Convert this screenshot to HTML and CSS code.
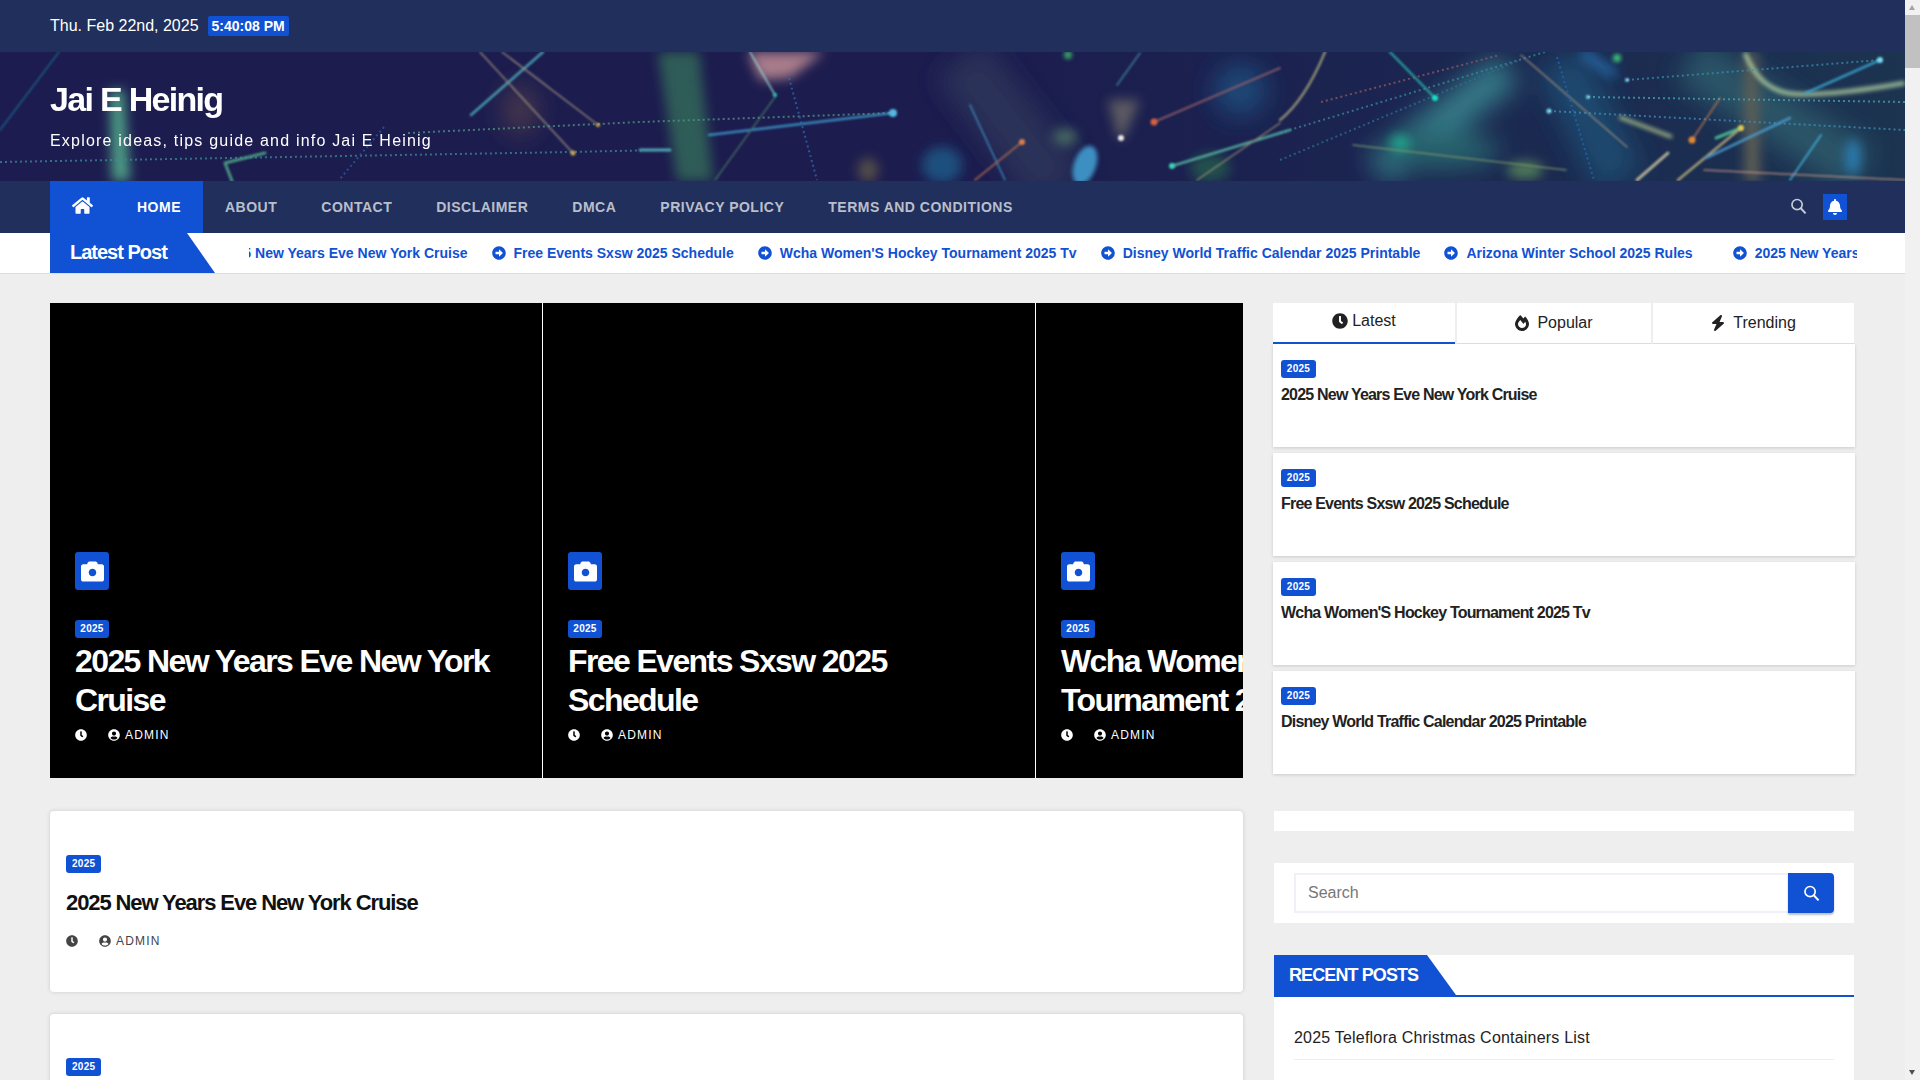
FILE: index.html
```html
<!DOCTYPE html>
<html lang="en">
<head>
    <meta charset="UTF-8">
    <meta name="viewport" content="width=device-width, initial-scale=1.0">
    <title>Jai E Heinig</title>
    <link rel="stylesheet" href="styles.css">
</head>
<body>
    <svg class="icon-defs" aria-hidden="true">
        <symbol id="i-clock" viewBox="0 0 512 512"><path d="M256,8C119,8,8,119,8,256S119,504,256,504,504,393,504,256,393,8,256,8Zm92.49,313h0l-20,25a16,16,0,0,1-22.49,2.5h0l-67-49.72a40,40,0,0,1-15-31.23V112a16,16,0,0,1,16-16h32a16,16,0,0,1,16,16V256l58,42.5A16,16,0,0,1,348.49,321Z"/></symbol>
        <symbol id="i-arrow" viewBox="0 0 512 512"><path d="M256 8c137 0 248 111 248 248S393 504 256 504 8 393 8 256 119 8 256 8zM140 300h116v70.9c0 10.7 13 16.1 20.5 8.5l114.3-114.9c4.7-4.7 4.7-12.2 0-16.9l-114.3-115c-7.6-7.6-20.5-2.2-20.5 8.5V212H140c-6.6 0-12 5.4-12 12v64c0 6.6 5.4 12 12 12z"/></symbol>
        <symbol id="i-user" viewBox="0 0 496 512"><path d="M248 8C111 8 0 119 0 256s111 248 248 248 248-111 248-248S385 8 248 8zm0 96c48.6 0 88 39.4 88 88s-39.4 88-88 88-88-39.4-88-88 39.4-88 88-88zm0 344c-58.7 0-111.3-26.6-146.5-68.2 18.8-35.4 55.6-59.8 98.5-59.8 2.4 0 4.8.4 7.1 1.1 13 4.2 26.6 6.9 40.9 6.9 14.3 0 28-2.7 40.9-6.9 2.3-.7 4.7-1.1 7.1-1.1 42.9 0 79.7 24.4 98.5 59.8C359.3 421.4 306.7 448 248 448z"/></symbol>
        <symbol id="i-camera" viewBox="0 0 512 512"><path fill-rule="evenodd" d="M512 144v288c0 26.5-21.5 48-48 48H48c-26.5 0-48-21.5-48-48V144c0-26.5 21.5-48 48-48h88l12.3-32.9c7-18.7 24.9-31.1 44.9-31.1h125.5c20 0 37.9 12.4 44.9 31.1L376 96h88c26.5 0 48 21.5 48 48zM340 280c0-46.4-37.6-84-84-84s-84 37.6-84 84 37.6 84 84 84 84-37.6 84-84z"/></symbol>
        <symbol id="i-home" viewBox="0 0 576 512"><path d="M280.37 148.26L96 300.11V464a16 16 0 0 0 16 16l112.06-.29a16 16 0 0 0 15.92-16V368a16 16 0 0 1 16-16h64a16 16 0 0 1 16 16v95.64a16 16 0 0 0 16 16.05L464 480a16 16 0 0 0 16-16V300L295.67 148.26a12.19 12.19 0 0 0-15.3 0zM571.6 251.47L488 182.56V44.05a12 12 0 0 0-12-12h-56a12 12 0 0 0-12 12v72.61L318.47 43a48 48 0 0 0-61 0L4.34 251.47a12 12 0 0 0-1.6 16.9l25.5 31A12 12 0 0 0 45.15 301l235.22-193.74a12.19 12.19 0 0 1 15.3 0L530.9 301a12 12 0 0 0 16.9-1.6l25.5-31a12 12 0 0 0-1.7-16.93z"/></symbol>
        <symbol id="i-bell" viewBox="0 0 448 512"><path d="M224 512c35.32 0 63.97-28.65 63.97-64H160.03c0 35.35 28.65 64 63.97 64zm215.39-149.71c-19.32-20.76-55.47-51.99-55.47-154.29 0-77.7-54.48-139.9-127.94-155.16V32c0-17.67-14.32-32-31.98-32s-31.98 14.33-31.98 32v20.84C118.56 68.1 64.08 130.3 64.08 208c0 102.3-36.15 133.53-55.47 154.29-6 6.45-8.66 14.16-8.61 21.71.11 16.4 12.98 32 32.1 32h383.8c19.12 0 32-15.6 32.1-32 .05-7.55-2.61-15.27-8.61-21.71z"/></symbol>
        <symbol id="i-fire" viewBox="0 0 448 512"><path d="M323.56 51.2c-20.8 19.3-39.58 39.59-56.22 59.97C240.08 73.62 206.28 35.53 168 0 69.74 91.17 0 209.96 0 281.6 0 408.85 100.29 512 224 512s224-103.15 224-230.4c0-53.27-51.98-163.14-124.44-230.4zm-19.47 340.65C282.43 407.01 255.72 416 226.86 416 154.71 416 96 368.26 96 290.75c0-38.61 24.31-72.63 72.79-130.75 6.93 7.98 98.83 125.34 98.83 125.34l58.63-66.88c4.14 6.85 7.91 13.55 11.27 19.97 27.35 52.19 15.81 118.97-33.43 153.42z"/></symbol>
        <symbol id="i-bolt" viewBox="0 0 448 512"><path d="M349.4 44.6c5.9-13.7 1.5-29.7-10.6-38.5s-28.6-8-39.9 1.8l-256 224c-10 8.8-13.6 22.9-8.9 35.3S50.7 288 64 288H175.5L98.6 467.4c-5.9 13.7-1.5 29.7 10.6 38.5s28.6 8 39.9-1.8l256-224c10-8.8 13.6-22.9 8.9-35.3s-18.1-20.3-31.3-20.3H272.5L349.4 44.6z"/></symbol>
        <symbol id="i-search" viewBox="0 0 24 24"><circle cx="10" cy="10" r="7.2" fill="none" stroke="currentColor" stroke-width="2.4"/><path d="M15.5 15.5L22 22.5" fill="none" stroke="currentColor" stroke-width="2.8"/></symbol>
    </svg>

    <header class="top-bar">
        <span class="top-date">Thu. Feb 22nd, 2025</span>
        <span class="top-time">5:40:08 PM</span>
    </header>

    <div class="brand">
        <!-- header photo, redrawn by hand -->
        <svg class="brand-art" viewBox="0 52 1905 129" preserveAspectRatio="none" aria-hidden="true">
            <defs>
                <linearGradient id="art-bg" x1="0" x2="1" y1="0" y2="0">
                    <stop offset="0" stop-color="#1d1c50"/>
                    <stop offset="0.5" stop-color="#1c1c4e"/>
                    <stop offset="0.72" stop-color="#1b2450"/>
                    <stop offset="1" stop-color="#1c3450"/>
                </linearGradient>
                <filter id="blur-xs"><feGaussianBlur stdDeviation="0.8"/></filter>
                <filter id="blur-s"><feGaussianBlur stdDeviation="2"/></filter>
                <filter id="blur-m"><feGaussianBlur stdDeviation="6"/></filter>
                <filter id="blur-l"><feGaussianBlur stdDeviation="13"/></filter>
            </defs>
            <rect x="0" y="52" width="1905" height="129" fill="url(#art-bg)"/>
            <g filter="url(#blur-l)" fill="none">
                <path d="M1378 170L1508 70" stroke="#347c88" stroke-width="36"/>
                <path d="M1560 60L1620 180" stroke="#1d4a6e" stroke-width="50"/>
                <path d="M1690 60L1860 170" stroke="#2a5568" stroke-width="50"/>
                <path d="M960 60L1060 190" stroke="#2c3258" stroke-width="60"/>
                <ellipse cx="1240" cy="90" rx="26" ry="26" fill="#1f4a78"/>
                <ellipse cx="1440" cy="150" rx="60" ry="20" fill="#27606c"/>
                <ellipse cx="520" cy="110" rx="16" ry="24" fill="#4c3a4c"/>
            </g>
            <g filter="url(#blur-m)">
                <path d="M110 90L124 90L130 181L112 181Z" fill="#4e9c84"/>
                <path d="M658 52L699 52L713 181L677 181Z" fill="#2f5c56"/>
                <path d="M748 52L824 52L790 78L760 80Z" fill="#a87c8a"/>
                <ellipse cx="942" cy="165" rx="20" ry="18" fill="#1f4f7e"/>
                <ellipse cx="868" cy="170" rx="10" ry="12" fill="#54504a"/>
                <ellipse cx="1065" cy="137" rx="12" ry="8" fill="#4a6c64"/>
                <ellipse cx="1210" cy="168" rx="20" ry="14" fill="#24504e"/>
                <ellipse cx="1400" cy="143" rx="10" ry="8" fill="#22a98e"/>
                <ellipse cx="1525" cy="170" rx="18" ry="9" fill="#4f7a5a"/>
                <ellipse cx="1853" cy="157" rx="7" ry="18" fill="#2a7fb5"/>
                <path d="M1582 53L1615 75" stroke="#2771b0" stroke-width="8"/>
                <path d="M1745 52L1757 52L1760 181L1745 181Z" fill="#5f5f54"/>
                <path d="M1108 100L1140 100L1124 138L1118 138Z" fill="#5c5a62"/>
            </g>
            <g filter="url(#blur-s)">
                <ellipse cx="1085" cy="165" rx="11" ry="20" transform="rotate(20 1085 165)" fill="#3d8fc2"/>
                <circle cx="1617" cy="58" r="4" fill="#3cc47a"/>
                <circle cx="1068" cy="55" r="4" fill="#3aa868"/>
                <path d="M1619 117L1672 137" stroke="#b2c68a" stroke-width="3"/>
                <path d="M1745 53Q1760 92 1795 94T1905 83" fill="none" stroke="#a9c89c" stroke-width="4"/>
            </g>
            <g fill="none" stroke-linecap="round" filter="url(#blur-xs)" opacity="0.82">
                <path d="M0 130L59 52" stroke="#1c6288" stroke-width="2"/>
                <path d="M471 115L543 52" stroke="#4eb6bf" stroke-width="2.5"/>
                <path d="M480 52L573 153" stroke="#a89c84" stroke-width="1.5"/>
                <path d="M502 52L598 125" stroke="#a89c84" stroke-width="1.5"/>
                <path d="M225 163L232 181M225 163L265 153" stroke="#52b28c" stroke-width="3"/>
                <path d="M750 52L775 95" stroke="#9cdfd6" stroke-width="1.5"/>
                <path d="M709 135L893 113" stroke="#3f9fd2" stroke-width="2.5"/>
                <path d="M640 150L670 150" stroke="#5ec4ce" stroke-width="3"/>
                <path d="M775 97L715 180" stroke="#4b7a6a" stroke-width="1.5"/>
                <path d="M970 105L1005 180" stroke="#3f9fd2" stroke-width="1.5"/>
                <path d="M1022 142L975 180" stroke="#a86a50" stroke-width="2"/>
                <path d="M1154 122L1280 68" stroke="#95606a" stroke-width="2"/>
                <path d="M1172 166L1290 130" stroke="#5cc0aa" stroke-width="2.5"/>
                <path d="M1197 180L1280 123" stroke="#a89c78" stroke-width="1.5"/>
                <path d="M1117 85L1140 53" stroke="#3f7f9c" stroke-width="2"/>
                <path d="M1280 120Q1305 100 1325 52" stroke="#a8a47c" stroke-width="2.5"/>
                <path d="M1390 52L1435 98" stroke="#2cb4aa" stroke-width="2.5"/>
                <path d="M1521 55L1627 147" stroke="#a8927e" stroke-width="1.5"/>
                <path d="M1353 145L1566 170" stroke="#7d9a6c" stroke-width="1.5"/>
                <path d="M1880 60L1806 93" stroke="#3aa7d2" stroke-width="2.5"/>
                <path d="M1692 140L1720 98" stroke="#a86f50" stroke-width="2"/>
                <path d="M1716 138L1741 128" stroke="#4fd09a" stroke-width="3"/>
                <path d="M1678 180L1741 128" stroke="#c2b67e" stroke-width="2.5"/>
                <path d="M1706 158L1790 118" stroke="#4b9fd0" stroke-width="2.5"/>
                <path d="M1790 180L1821 135" stroke="#43b4de" stroke-width="2"/>
                <path d="M1704 170L1905 180" stroke="#c59488" stroke-width="1.5"/>
                <path d="M1637 180L1668 153" stroke="#cfc7a0" stroke-width="3"/>
            </g>
            <g fill="none" stroke-width="2" stroke-dasharray="2 3" opacity="0.75">
                <path d="M0 162L571 152L660 150" stroke="#3b8c95"/>
                <path d="M408 133L640 122L893 113" stroke="#4d9a80"/>
                <path d="M384 127L339 180" stroke="#2a5ea2"/>
                <path d="M789 78L817 180" stroke="#2b6cb0"/>
                <path d="M1321 102L1500 55" stroke="#955a62"/>
                <path d="M1280 133L1545 52" stroke="#3a8c98"/>
                <path d="M1557 57L1594 180" stroke="#2a64ac"/>
                <path d="M1627 80L1880 60" stroke="#3a8cac"/>
                <path d="M1588 97L1905 102" stroke="#4aa6b2"/>
                <path d="M1549 111L1905 130" stroke="#3f8eb6"/>
                <path d="M1280 160L1520 60" stroke="#2c6f90"/>
            </g>
            <g filter="url(#blur-xs)">
                <circle cx="598" cy="125" r="2" fill="#c9a94e"/>
                <circle cx="573" cy="153" r="2.5" fill="#c9a94e"/>
                <circle cx="893" cy="113" r="4" fill="#55b8e2"/>
                <circle cx="775" cy="95" r="2" fill="#22c4ac"/>
                <circle cx="1022" cy="142" r="3" fill="#d9804e"/>
                <circle cx="1121" cy="138" r="3" fill="#f0e8e6"/>
                <circle cx="1154" cy="122" r="3.5" fill="#d8603e"/>
                <circle cx="1172" cy="166" r="3" fill="#3cd0b0"/>
                <circle cx="1435" cy="98" r="3" fill="#1ee0c4"/>
                <circle cx="1880" cy="60" r="3" fill="#7ad8ee"/>
                <circle cx="1627" cy="80" r="2" fill="#7ad8ee"/>
                <circle cx="1588" cy="97" r="2" fill="#7ad8ee"/>
                <circle cx="1549" cy="111" r="2.5" fill="#7ad8ee"/>
                <circle cx="1692" cy="140" r="3.5" fill="#e08838"/>
                <circle cx="1741" cy="128" r="3" fill="#e0c850"/>
            </g>
        </svg>
        <div class="brand-text">
            <h1 class="site-title">Jai E Heinig</h1>
            <p class="site-tagline">Explore ideas, tips guide and info Jai E Heinig</p>
        </div>
    </div>

    <nav class="main-nav">
        <ul class="nav-list">
            <li class="nav-item nav-home"><a href="#"><svg class="nav-home-icon"><use href="#i-home"/></svg></a></li>
            <li class="nav-item active"><a href="#">Home</a></li>
            <li class="nav-item"><a href="#">About</a></li>
            <li class="nav-item"><a href="#">Contact</a></li>
            <li class="nav-item"><a href="#">Disclaimer</a></li>
            <li class="nav-item"><a href="#">DMCA</a></li>
            <li class="nav-item"><a href="#">Privacy Policy</a></li>
            <li class="nav-item"><a href="#">Terms and Conditions</a></li>
        </ul>
        <div class="nav-tools">
            <svg class="nav-search"><use href="#i-search"/></svg>
            <span class="nav-bell"><svg><use href="#i-bell"/></svg></span>
        </div>
    </nav>

    <div class="ticker">
        <div class="ticker-label">Latest Post</div>
        <div class="ticker-window">
            <div class="ticker-track">
                <a class="ticker-item" href="#"><svg><use href="#i-arrow"/></svg>2025 New Years Eve New York Cruise</a>
                <a class="ticker-item" href="#"><svg><use href="#i-arrow"/></svg>Free Events Sxsw 2025 Schedule</a>
                <a class="ticker-item" href="#"><svg><use href="#i-arrow"/></svg>Wcha Women'S Hockey Tournament 2025 Tv</a>
                <a class="ticker-item" href="#"><svg><use href="#i-arrow"/></svg>Disney World Traffic Calendar 2025 Printable</a>
                <a class="ticker-item ticker-last" href="#"><svg><use href="#i-arrow"/></svg>Arizona Winter School 2025 Rules</a>
                <a class="ticker-item" href="#"><svg><use href="#i-arrow"/></svg>2025 New Years Eve New York Cruise</a>
            </div>
        </div>
    </div>

    <div class="page-body">
        <main class="main-col">
            <section class="slider">
                <article class="slide">
                    <span class="slide-camera"><svg><use href="#i-camera"/></svg></span>
                    <span class="tag">2025</span>
                    <h2 class="slide-title">2025 New Years Eve New York Cruise</h2>
                    <div class="meta"><svg><use href="#i-clock"/></svg><svg class="meta-user"><use href="#i-user"/></svg><span>ADMIN</span></div>
                </article>
                <article class="slide">
                    <span class="slide-camera"><svg><use href="#i-camera"/></svg></span>
                    <span class="tag">2025</span>
                    <h2 class="slide-title">Free Events Sxsw 2025 Schedule</h2>
                    <div class="meta"><svg><use href="#i-clock"/></svg><svg class="meta-user"><use href="#i-user"/></svg><span>ADMIN</span></div>
                </article>
                <article class="slide">
                    <span class="slide-camera"><svg><use href="#i-camera"/></svg></span>
                    <span class="tag">2025</span>
                    <h2 class="slide-title">Wcha Women'S Hockey Tournament 2025 Tv</h2>
                    <div class="meta"><svg><use href="#i-clock"/></svg><svg class="meta-user"><use href="#i-user"/></svg><span>ADMIN</span></div>
                </article>
            </section>

            <article class="post-card">
                <span class="tag">2025</span>
                <h3 class="post-title">2025 New Years Eve New York Cruise</h3>
                <div class="meta"><svg><use href="#i-clock"/></svg><svg class="meta-user"><use href="#i-user"/></svg><span>ADMIN</span></div>
            </article>
            <article class="post-card">
                <span class="tag">2025</span>
            </article>
        </main>

        <aside class="side-col">
            <div class="tabs">
                <a class="tab active" href="#"><svg><use href="#i-clock"/></svg>Latest</a>
                <a class="tab tab-popular" href="#"><svg><use href="#i-fire"/></svg>Popular</a>
                <a class="tab tab-trending" href="#"><svg><use href="#i-bolt"/></svg>Trending</a>
            </div>
            <div class="tab-posts">
                <article class="tab-post"><span class="tag">2025</span><h4 class="tab-post-title">2025 New Years Eve New York Cruise</h4></article>
                <article class="tab-post"><span class="tag">2025</span><h4 class="tab-post-title">Free Events Sxsw 2025 Schedule</h4></article>
                <article class="tab-post"><span class="tag">2025</span><h4 class="tab-post-title">Wcha Women'S Hockey Tournament 2025 Tv</h4></article>
                <article class="tab-post"><span class="tag">2025</span><h4 class="tab-post-title">Disney World Traffic Calendar 2025 Printable</h4></article>
            </div>

            <div class="empty-widget"></div>

            <form class="search-widget">
                <input class="search-input" type="text" placeholder="Search">
                <button class="search-btn" type="button"><svg><use href="#i-search"/></svg></button>
            </form>

            <section class="recent">
                <div class="recent-head"><h3 class="recent-title">RECENT POSTS</h3></div>
                <ul class="recent-list">
                    <li>2025 Teleflora Christmas Containers List</li>
                </ul>
            </section>
        </aside>
    </div>

    <div class="fake-scrollbar">
        <span class="sb-up"></span>
        <span class="sb-thumb"></span>
        <span class="sb-down"></span>
    </div>
</body>
</html>
```

FILE: styles.css
```css
* {
    box-sizing: border-box;
    margin: 0;
    padding: 0;
}

html, body {
    height: 1080px;
    overflow: hidden;
}

body {
    background: #eeeeee;
    color: #222;
    font-family: "Liberation Sans", Arial, sans-serif;
    font-size: 16px;
    padding-right: 15px;
    position: relative;
}

a {
    color: inherit;
    text-decoration: none;
}

ul {
    list-style: none;
}

.icon-defs {
    display: none;
}

svg {
    fill: currentColor;
}

/* top bar */
.top-bar {
    background: #202f5b;
    color: #fff;
    height: 52px;
    padding: 16px 50px 0;
    display: flex;
    align-items: flex-start;
    gap: 9px;
}

.top-date {
    line-height: 20px;
}

.top-time {
    background: #1151d3;
    border-radius: 2px;
    font-size: 14px;
    font-weight: 700;
    line-height: 20px;
    padding: 0 4px;
}

/* brand */
.brand {
    height: 129px;
    position: relative;
    overflow: hidden;
    background: #1d1c52;
}

.brand-art {
    position: absolute;
    inset: 0;
    width: 100%;
    height: 100%;
}

.brand-text {
    position: relative;
    padding: 26px 50px 0;
    color: #fff;
}

.site-title {
    font-size: 34px;
    line-height: 42px;
    letter-spacing: -1.7px;
}

.site-tagline {
    font-size: 16px;
    letter-spacing: 1.2px;
    line-height: 24px;
    margin-top: 9px;
}

/* nav */
.main-nav {
    background: #202f5b;
    height: 52px;
    padding: 0 58px 0 50px;
    display: flex;
    justify-content: space-between;
    align-items: center;
}

.nav-list {
    display: flex;
    height: 52px;
}

.nav-item a {
    display: flex;
    align-items: center;
    height: 52px;
    padding: 0 22px;
    color: rgba(255, 255, 255, 0.7);
    font-size: 14px;
    font-weight: 700;
    letter-spacing: 0.5px;
    text-transform: uppercase;
}

.nav-item.active a,
.nav-home a {
    background: #1151d3;
    color: #fff;
}

.nav-home a {
    width: 65px;
    padding: 0 0 0 22px;
}

.nav-home-icon {
    width: 21px;
    height: 19px;
    margin-top: -4px;
}

.nav-tools {
    display: flex;
    align-items: center;
    gap: 16px;
}

.nav-search {
    width: 17px;
    height: 18px;
    color: rgba(255, 255, 255, 0.75);
    margin-top: -2px;
}

.nav-bell {
    background: #1151d3;
    color: #fff;
    width: 24px;
    height: 26px;
    display: flex;
    align-items: center;
    justify-content: center;
}

.nav-bell svg {
    width: 14px;
    height: 16px;
}

/* ticker */
.ticker {
    background: #fff;
    border-bottom: 1px solid #ddd;
    height: 41px;
    padding: 0 48px 0 50px;
    display: flex;
}

.ticker-label {
    background: #1151d3;
    color: #fff;
    width: 137px;
    height: 40px;
    padding-left: 20px;
    font-size: 20px;
    font-weight: 700;
    letter-spacing: -1px;
    line-height: 38px;
    position: relative;
    white-space: nowrap;
}

.ticker-label::after {
    content: "";
    position: absolute;
    left: 100%;
    top: 0;
    border-bottom: 40px solid #1151d3;
    border-right: 28px solid transparent;
}

.ticker-window {
    flex: 1;
    margin-left: 62px;
    height: 40px;
    overflow: hidden;
}

.ticker-track {
    display: flex;
    gap: 24px;
    margin-left: -51px;
    white-space: nowrap;
}

.ticker-item {
    color: #1151d3;
    font-size: 14px;
    font-weight: 700;
    line-height: 40px;
    display: flex;
    align-items: center;
    flex: none;
}

.ticker-item svg {
    width: 14px;
    height: 14px;
    margin-right: 8px;
}

.ticker-last {
    margin-right: 16px;
}

/* page layout */
.page-body {
    padding: 29px 50px 0;
    display: grid;
    grid-template-columns: 1193px 582px;
    gap: 30px;
    align-items: start;
}

.tag {
    background: #1151d3;
    border-radius: 3px;
    color: #fff;
    display: block;
    width: fit-content;
    font-size: 10px;
    font-weight: 700;
    line-height: 18px;
    padding: 0 6px;
    letter-spacing: 0.3px;
}

.meta {
    display: flex;
    align-items: center;
    font-size: 12px;
    letter-spacing: 1.2px;
    line-height: 16px;
}

.meta svg {
    width: 12px;
    height: 12px;
}

.meta .meta-user {
    margin-left: 21px;
    margin-right: 5px;
}

/* slider */
.slider {
    display: flex;
    height: 475px;
    overflow: hidden;
}

.slide {
    background: #000;
    border-right: 1px solid #fff;
    color: #fff;
    flex: 0 0 493px;
    padding: 249px 25px 0;
}

.slide-camera {
    background: #1151d3;
    border-radius: 3px;
    width: 34px;
    height: 38px;
    display: flex;
    align-items: center;
    justify-content: center;
    margin-bottom: 30px;
}

.slide-camera svg {
    width: 23px;
    height: 23px;
}

.slide .tag {
    width: 34px;
    padding: 0;
    text-align: center;
}

.slide-title {
    font-size: 32px;
    line-height: 39px;
    letter-spacing: -1.6px;
    margin-top: 4px;
    margin-bottom: 7px;
}

/* post cards */
.post-card {
    background: #fff;
    border-radius: 4px;
    box-shadow: 0 0 4px rgba(0, 0, 0, 0.15);
    height: 181px;
    margin-top: 33px;
    padding: 44px 16px 0;
}

.post-card + .post-card {
    margin-top: 22px;
}

.post-title {
    color: #111;
    font-size: 22px;
    line-height: 30px;
    letter-spacing: -1.1px;
    margin-top: 15px;
    margin-bottom: 15px;
}

.post-card .meta {
    color: #444;
}

/* sidebar tabs */
.tabs {
    display: flex;
    gap: 2px;
    height: 41px;
    padding-left: 1px;
}

.tab {
    background: #fff;
    border-bottom: 1px solid #ddd;
    color: #222;
    display: flex;
    align-items: center;
    justify-content: center;
    line-height: 40px;
    width: 194px;
}

.tab svg {
    height: 16px;
    margin-right: 8px;
    width: 14px;
}

.tab.active {
    border-bottom: 2px solid #1151d3;
    margin-left: -1px;
    padding-bottom: 3px;
    width: 182px;
    height: 41px;
}

.tab.active svg {
    margin-right: 4px;
    width: 16px;
}

.tab-trending {
    width: 201px;
}

.tab-post {
    background: #fff;
    box-shadow: 0 1px 3px rgba(0, 0, 0, 0.15);
    height: 103px;
    margin-bottom: 6px;
    padding: 16px 8px 0;
}

.tab-post .tag {
    width: 35px;
    padding: 0;
    text-align: center;
}

.tab-post-title {
    color: #222;
    font-size: 16px;
    letter-spacing: -0.8px;
    line-height: 20px;
    margin-top: 7px;
}

.empty-widget {
    background: #fff;
    height: 20px;
    margin-top: 37px;
    margin-left: 1px;
    margin-right: 1px;
}

/* search */
.search-widget {
    background: #fff;
    display: flex;
    height: 60px;
    margin: 32px 1px 0;
    padding: 10px 20px;
}

.search-input {
    border: 2px solid #eef1f8;
    border-right: none;
    color: #555;
    flex: 1;
    font-family: inherit;
    font-size: 16px;
    height: 40px;
    outline: none;
    padding: 0 12px;
}

.search-input::placeholder {
    color: #777;
}

.search-btn {
    background: #1151d3;
    border: none;
    border-radius: 0 4px 4px 0;
    box-shadow: 0 2px 2px rgba(0, 0, 0, 0.25);
    color: #fff;
    height: 40px;
    width: 46px;
    display: flex;
    align-items: center;
    justify-content: center;
}

.search-btn svg {
    width: 17px;
    height: 18px;
}

/* recent posts */
.recent {
    background: #fff;
    margin: 32px 1px 0;
    padding-bottom: 40px;
}

.recent-head {
    border-bottom: 2px solid #1151d3;
    height: 42px;
}

.recent-title {
    background: #1151d3;
    color: #fff;
    font-size: 18px;
    letter-spacing: -0.9px;
    line-height: 40px;
    height: 40px;
    padding-left: 15px;
    position: relative;
    width: 153px;
}

.recent-title::after {
    content: "";
    position: absolute;
    left: 100%;
    top: 0;
    border-bottom: 40px solid #1151d3;
    border-right: 29px solid transparent;
}

.recent-list {
    padding: 21px 20px 0;
}

.recent-list li {
    border-bottom: 1px solid #eee;
    color: #222;
    letter-spacing: 0.2px;
    line-height: 40px;
    padding-bottom: 1px;
}

/* the browser window's own scrollbar */
.fake-scrollbar {
    position: absolute;
    top: 0;
    right: 0;
    bottom: 0;
    width: 15px;
    background: #f1f1f1;
}

.sb-up {
    position: absolute;
    top: 5px;
    left: 4px;
    border-left: 3.5px solid transparent;
    border-right: 3.5px solid transparent;
    border-bottom: 5px solid #a3a3a3;
}

.sb-thumb {
    position: absolute;
    top: 15px;
    left: 0;
    width: 15px;
    height: 53px;
    background: #c1c1c1;
}

.sb-down {
    position: absolute;
    bottom: 5px;
    left: 4px;
    border-left: 3.5px solid transparent;
    border-right: 3.5px solid transparent;
    border-top: 5px solid #505050;
}
```
